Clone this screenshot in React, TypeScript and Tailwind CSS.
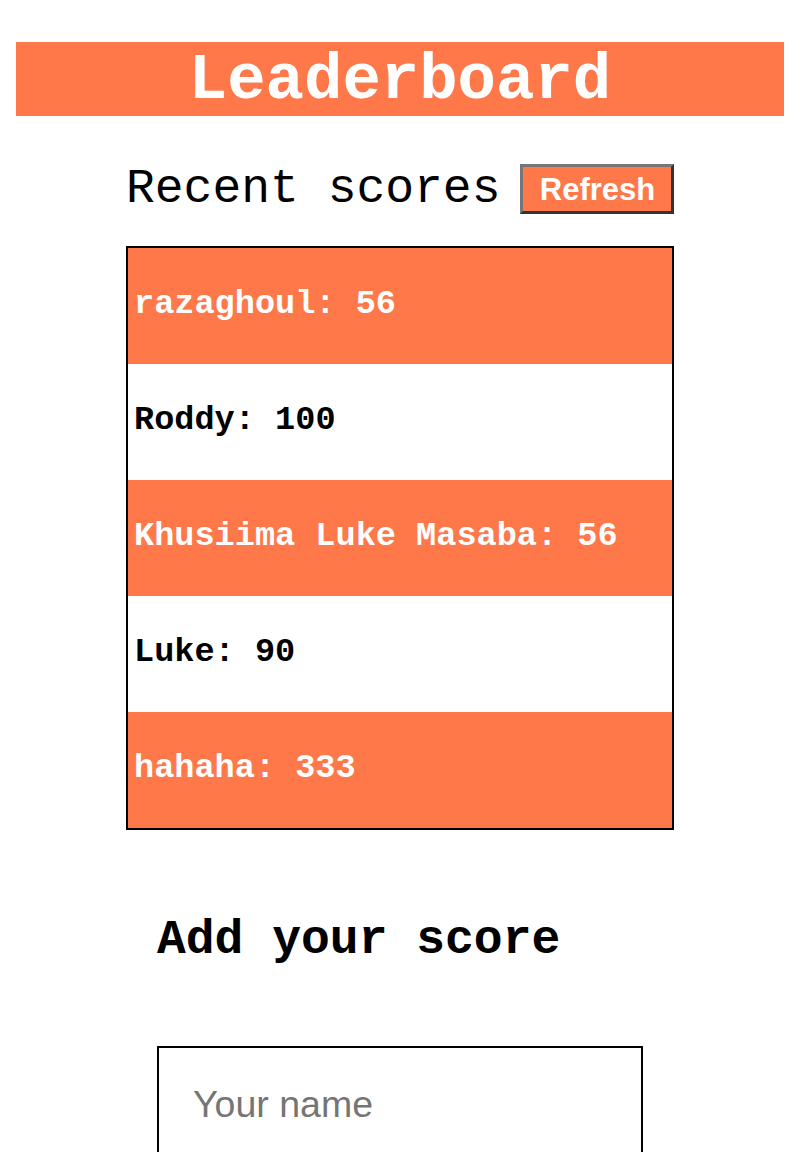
const scores = [
  { name: "razaghoul", score: 56 },
  { name: "Roddy", score: 100 },
  { name: "Khusiima Luke Masaba", score: 56 },
  { name: "Luke", score: 90 },
  { name: "hahaha", score: 333 },
];

const mono = "font-['Liberation_Mono','Courier_New',monospace]";

export default function App() {
  return (
    <div className="min-h-[1152px] bg-white pt-[42px]">
      <header className="mx-4 flex h-[74px] items-center justify-center bg-[#ff7849] pt-[4px]">
        <h1 className={`${mono} text-[64px] font-bold leading-none text-white`}>Leaderboard</h1>
      </header>

      <section className="mx-auto mt-[48px] w-[548px]">
        <div className="flex items-center gap-[20px]">
          <h2 className={`${mono} shrink-0 whitespace-nowrap text-[48px] leading-none text-black`}>Recent scores</h2>
          <button className="h-[50px] w-[154px] shrink-0 border-[3px] border-t-[#767676] border-l-[#767676] border-r-[#333] border-b-[#333] bg-[#ff7849] font-['Liberation_Sans',Arial,sans-serif] text-[31px] font-bold leading-none text-white">
            Refresh
          </button>
        </div>

        <ul className="mt-[32px] border-2 border-black">
          {scores.map((s, i) => (
            <li
              key={s.name}
              className={`flex h-[116px] items-center px-[6px] pb-[4px] ${mono} text-[33.6px] font-bold ${
                i % 2 === 0 ? "bg-[#ff7849] text-white" : "bg-white text-black"
              }`}
            >
              {s.name}: {s.score}
            </li>
          ))}
        </ul>
      </section>

      <section className="mx-auto mt-[86px] w-[486px]">
        <h2 className={`${mono} text-[48px] font-bold leading-none text-black`}>Add your score</h2>
        <input
          placeholder="Your name"
          className="mt-[82px] h-[116px] w-full border-2 border-black px-[34px] font-['Liberation_Sans',Arial,sans-serif] text-[37.5px] text-black outline-none placeholder:text-[#757575]"
        />
      </section>
    </div>
  );
}
